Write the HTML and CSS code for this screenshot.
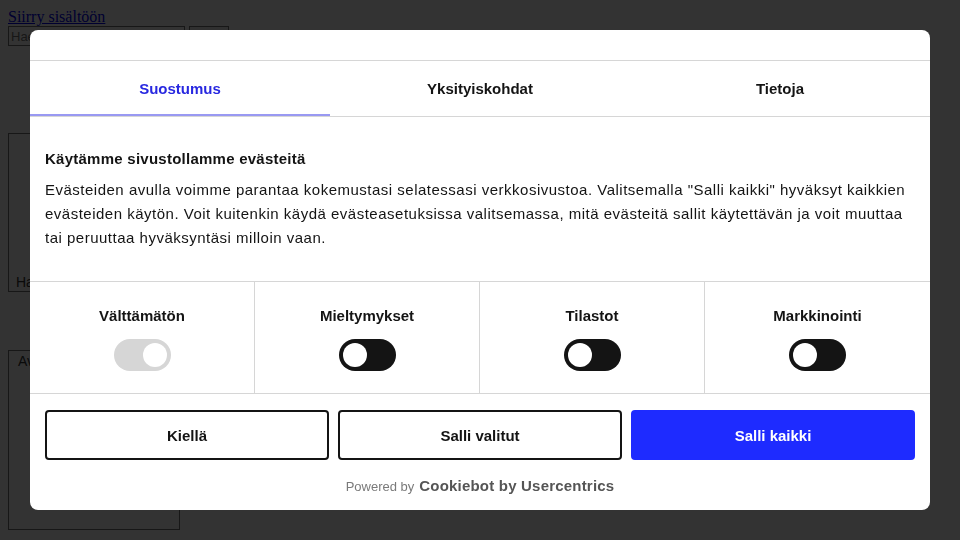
FILE: index.html
```html
<!DOCTYPE html>
<html lang="fi">
<head>
    <meta charset="UTF-8">
    <meta name="viewport" content="width=device-width, initial-scale=1.0">
    <title>Evästeet</title>
    <link rel="stylesheet" href="styles.css">
</head>
<body>
    <!-- Page behind the consent dialog -->
    <a class="skip-link" href="#content">Siirry sisältöön</a>
    <form class="search">
        <input type="text" placeholder="Hae sivustolta">
        <button type="button"></button>
    </form>
    <div class="page-box box-first"><span>Hae</span></div>
    <div class="page-box box-second"><span>Avaa</span></div>

    <!-- Cookie consent -->
    <div class="overlay">
        <div class="dialog">
            <div class="dialog-header"></div>

            <nav class="tabs">
                <div class="tab tab-active">Suostumus</div>
                <div class="tab">Yksityiskohdat</div>
                <div class="tab">Tietoja</div>
            </nav>

            <div class="dialog-body">
                <h2 class="body-title">Käytämme sivustollamme evästeitä</h2>
                <p class="body-text">Evästeiden avulla voimme parantaa kokemustasi selatessasi verkkosivustoa. Valitsemalla "Salli kaikki" hyväksyt kaikkien evästeiden käytön. Voit kuitenkin käydä evästeasetuksissa valitsemassa, mitä evästeitä sallit käytettävän ja voit muuttaa tai peruuttaa hyväksyntäsi milloin vaan.</p>
            </div>

            <div class="levels">
                <div class="level">
                    <span class="level-name">Välttämätön</span>
                    <span class="switch switch-locked"></span>
                </div>
                <div class="level">
                    <span class="level-name">Mieltymykset</span>
                    <span class="switch"></span>
                </div>
                <div class="level">
                    <span class="level-name">Tilastot</span>
                    <span class="switch"></span>
                </div>
                <div class="level">
                    <span class="level-name">Markkinointi</span>
                    <span class="switch"></span>
                </div>
            </div>

            <div class="actions">
                <button class="btn">Kiellä</button>
                <button class="btn">Salli valitut</button>
                <button class="btn btn-primary">Salli kaikki</button>
            </div>

            <div class="powered">
                <span class="powered-by">Powered by</span>
                <span class="powered-brand">Cookiebot by Usercentrics</span>
            </div>
        </div>
    </div>
</body>
</html>
```

FILE: styles.css
```css
body {
    margin: 8px;
    background-color: #fff;
    font-family: "Liberation Serif", serif;
}

.skip-link {
    display: block;
    font-size: 16px;
    color: #0000ee;
}

.search {
    display: flex;
    gap: 4px;
}

.search input {
    width: 171px;
    height: 16px;
    padding: 1px 2px;
    border: 1px solid #767676;
    font-family: "Liberation Sans", sans-serif;
    font-size: 13px;
}

.search button {
    width: 40px;
    height: 21px;
    border: 1px solid #767676;
    background-color: #efefef;
}

.page-box {
    box-sizing: border-box;
    border: 1px solid #767676;
    font-family: "Liberation Sans", sans-serif;
    font-size: 14px;
    color: #333;
}

.box-first {
    width: 300px;
    height: 159px;
    margin-top: 86px;
    display: flex;
    align-items: flex-end;
    padding: 0 7px 1px;
}

.box-second {
    width: 172px;
    height: 180px;
    margin-top: 58px;
    padding: 2px 9px;
}

/* Consent dialog */
.overlay {
    position: fixed;
    inset: 0;
    background-color: rgba(0, 0, 0, 0.8);
    display: flex;
    justify-content: center;
    align-items: flex-start;
    padding-top: 30px;
    font-family: "Liberation Sans", Arial, sans-serif;
    color: #141414;
}

.dialog {
    width: 900px;
    height: 480px;
    background-color: #fff;
    border-radius: 8px;
    display: flex;
    flex-direction: column;
    overflow: hidden;
}

.dialog-header {
    height: 30px;
    border-bottom: 1px solid #d6d6d6;
}

.tabs {
    display: flex;
    height: 55px;
    border-bottom: 1px solid #d6d6d6;
}

.tab {
    flex: 1;
    display: flex;
    align-items: center;
    justify-content: center;
    font-size: 15px;
    font-weight: bold;
    border-bottom: 2px solid transparent;
    padding-top: 1px;
}

.tab-active {
    color: #2828e0;
    border-bottom-color: #9999f2;
}

.dialog-body {
    padding: 32px 15px 31px;
}

.body-title {
    margin: 0;
    font-size: 15px;
    line-height: 20px;
    letter-spacing: 0.25px;
}

.body-text {
    margin: 9px 0 0;
    font-size: 15px;
    line-height: 24px;
    letter-spacing: 0.5px;
}

.levels {
    display: grid;
    grid-template-columns: repeat(4, 1fr);
    border-top: 1px solid #d6d6d6;
    border-bottom: 1px solid #d6d6d6;
}

.level {
    display: flex;
    flex-direction: column;
    align-items: center;
    padding: 24px 0 22px;
    border-right: 1px solid #d6d6d6;
}

.level:last-child {
    border-right: none;
}

.level-name {
    font-size: 15px;
    font-weight: bold;
    line-height: 20px;
    margin-bottom: 13px;
}

.switch {
    position: relative;
    width: 57px;
    height: 32px;
    border-radius: 16px;
    background-color: #141414;
}

.switch::after {
    content: "";
    position: absolute;
    top: 4px;
    left: 4px;
    width: 24px;
    height: 24px;
    border-radius: 50%;
    background-color: #fff;
}

.switch-locked {
    background-color: #d6d6d6;
}

.switch-locked::after {
    left: auto;
    right: 4px;
}

.actions {
    display: flex;
    gap: 9px;
    padding: 16px 15px 0;
}

.btn {
    flex: 1;
    height: 50px;
    border: 2px solid #141414;
    border-radius: 4px;
    background-color: #fff;
    color: #141414;
    font-family: "Liberation Sans", Arial, sans-serif;
    font-size: 15px;
    font-weight: bold;
}

.btn-primary {
    background-color: #1e2bff;
    border-color: #1e2bff;
    color: #fff;
}

.powered {
    display: flex;
    justify-content: center;
    align-items: baseline;
    gap: 5px;
    padding-top: 16px;
    line-height: 20px;
}

.powered-by {
    font-size: 13px;
    color: #7a7a7a;
}

.powered-brand {
    font-size: 15px;
    font-weight: bold;
    color: #555;
    letter-spacing: 0.2px;
}
```
